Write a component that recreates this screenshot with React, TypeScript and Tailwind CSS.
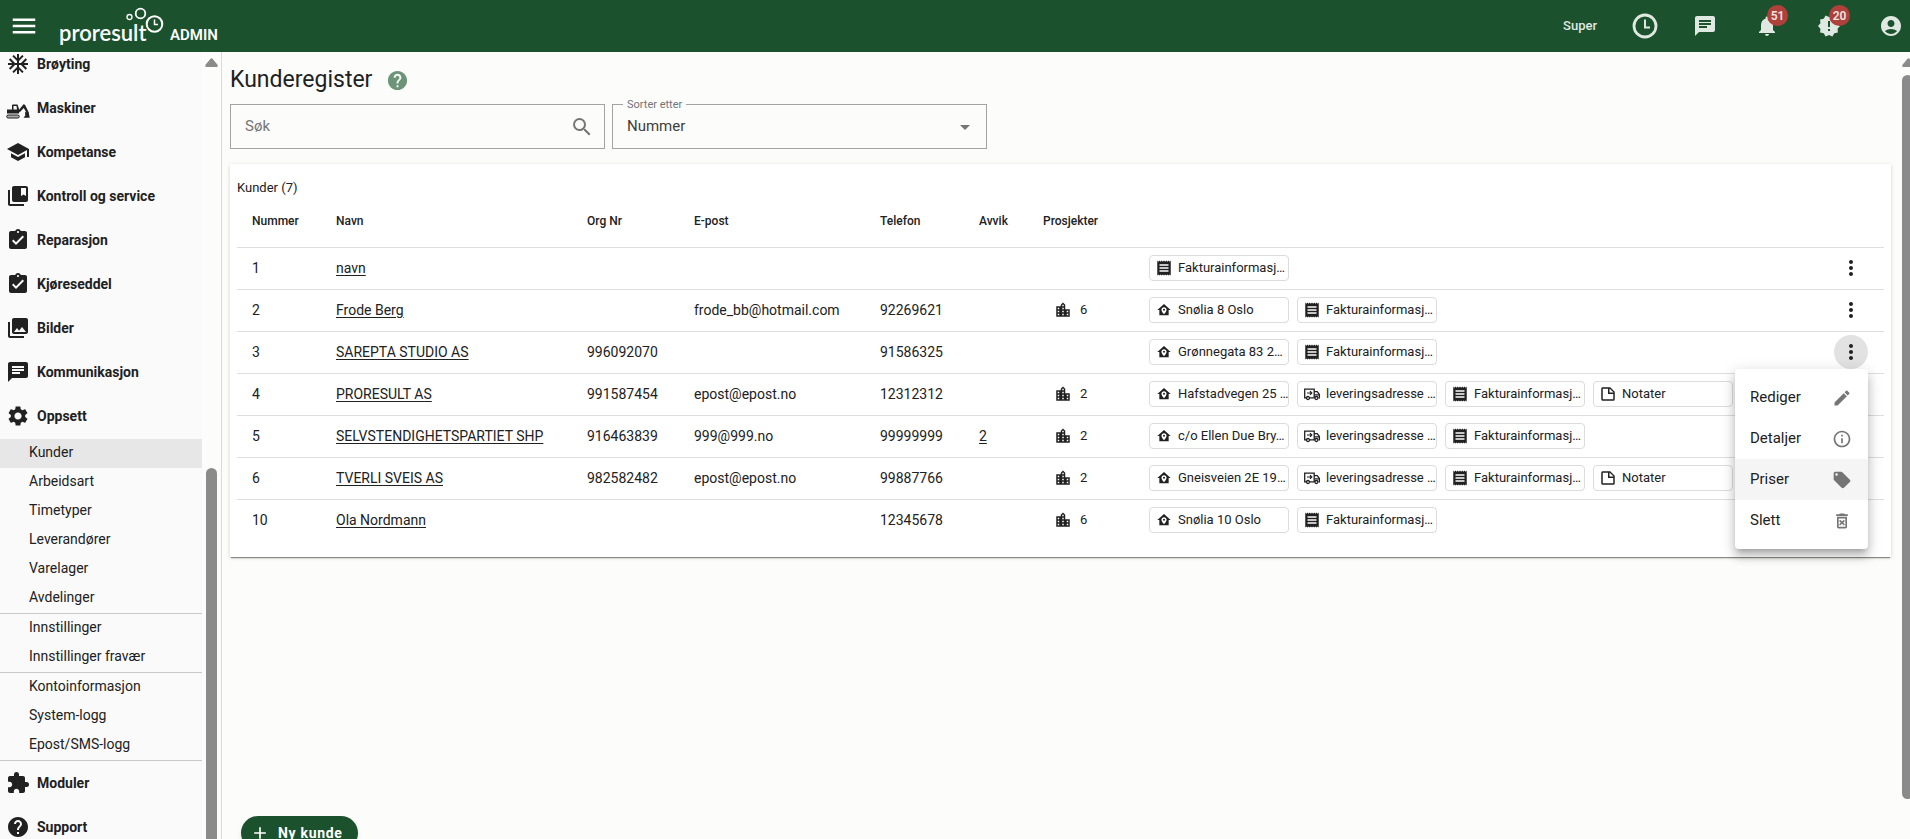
import React from "react";
import {
  MdAcUnit, MdAccountCircle, MdAdd, MdArrowDropDown, MdAssignmentTurnedIn, MdChat, MdCollectionsBookmark,
  MdEdit, MdExtension, MdHelp, MdLocalOffer, MdLocationCity, MdMenu, MdMoreVert, MdNewReleases,
  MdNotifications, MdOutlineDeleteForever, MdOutlineInfo, MdPhotoLibrary, MdReceipt, MdSchool, MdSearch, MdSettings,
} from "react-icons/md";

function Excavator() {
  return (
    <svg viewBox="0 0 24 24" className="mt-1 size-6" fill="currentColor" aria-hidden="true">
      <path fillRule="evenodd" d="M1 15.500v-4h5V7.500a1 1 0 0 1 1-1h4.500l1.500 4.500v4.500zM7.500 8v3.500h3.500L10.500 8z" />
      <path d="M12.500 12.500 L17.500 6.300l1.500.5 4 8.200-2 .8-3.200-5.800-4.300 4.500z" />
      <path d="M19 14l3.800 1 .9 4.800h-6.200l1.800-2.300z" />
      <rect x="0.700" y="17" width="12.600" height="3" rx="1.500" fill="#aaa" stroke="currentColor" strokeWidth="1" />
    </svg>
  );
}

function ClockIcon() {
  return (
    <svg viewBox="0 0 26 26" className="size-[26px]" fill="none" stroke="currentColor" strokeWidth="2.800" aria-hidden="true">
      <circle cx="13" cy="13" r="11" />
      <path d="M13 6.500v8h5" strokeWidth="2" />
    </svg>
  );
}

function HomePin() {
  return (
    <svg viewBox="0 0 24 24" className="size-4" fill="currentColor" aria-hidden="true">
      <path d="M12,3L2,12H5V20H19V12H22L12,3M12,7.700C14.100,7.700 15.800,9.400 15.800,11.500C15.800,14.500 12,18 12,18C12,18 8.200,14.500 8.200,11.500C8.200,9.400 9.900,7.700 12,7.700M12,10A1.500,1.500 0 0,0 10.500,11.500A1.500,1.500 0 0,0 12,13A1.500,1.500 0 0,0 13.500,11.500A1.500,1.500 0 0,0 12,10Z" />
    </svg>
  );
}

function Truck() {
  return (
    <svg viewBox="0 0 18 18" className="size-[18px]" fill="none" stroke="currentColor" strokeWidth="1.300" aria-hidden="true">
      <path d="M3 12.800H1.700V4.200H11.200V12.800H7M11.200 6.700H14.200L16.400 9.500V12.800H15.500" />
      <path d="M11.500 9.800H16" />
      <path d="M4 8H8.500M7 6.200 8.800 8 7 9.800" strokeWidth="1.200" />
      <circle cx="5" cy="13" r="1.500" />
      <circle cx="13.400" cy="13" r="1.500" />
    </svg>
  );
}

function Note() {
  return (
    <svg viewBox="0 0 24 24" className="size-[18px]" fill="currentColor" aria-hidden="true">
      <path d="M14,10H19.500L14,4.500V10M5,3H15L21,9V19A2,2 0 0,1 19,21H5C3.890,21 3,20.100 3,19V5C3,3.890 3.890,3 5,3M5,5V19H19V12H12V5H5Z" />
    </svg>
  );
}

type ChipKind = "home" | "truck" | "receipt" | "note";

const chipIcons: Record<ChipKind, React.ReactNode> = {
  home: <HomePin />,
  truck: <Truck />,
  receipt: <MdReceipt className="size-[18px]" />,
  note: <Note />,
};

interface Customer {
  nr: number;
  name: string;
  org?: string;
  email?: string;
  phone?: string;
  deviations?: number;
  projects?: number;
  chips: [ChipKind, string][];
  open?: boolean;
}

const invoice: [ChipKind, string] = ["receipt", "Fakturainformasj…"];
const delivery: [ChipKind, string] = ["truck", "leveringsadresse …"];
const notes: [ChipKind, string] = ["note", "Notater"];

const customers: Customer[] = [
  { nr: 1, name: "navn", chips: [invoice] },
  { nr: 2, name: "Frode Berg", email: "frode_bb@hotmail.com", phone: "92269621", projects: 6, chips: [["home", "Snølia 8 Oslo"], invoice] },
  { nr: 3, name: "SAREPTA STUDIO AS", org: "996092070", phone: "91586325", chips: [["home", "Grønnegata 83 2…"], invoice], open: true },
  { nr: 4, name: "PRORESULT AS", org: "991587454", email: "epost@epost.no", phone: "12312312", projects: 2, chips: [["home", "Hafstadvegen 25 …"], delivery, invoice, notes] },
  { nr: 5, name: "SELVSTENDIGHETSPARTIET SHP", org: "916463839", email: "999@999.no", phone: "99999999", deviations: 2, projects: 2, chips: [["home", "c/o Ellen Due Bry…"], delivery, invoice] },
  { nr: 6, name: "TVERLI SVEIS AS", org: "982582482", email: "epost@epost.no", phone: "99887766", projects: 2, chips: [["home", "Gneisveien 2E 19…"], delivery, invoice, notes] },
  { nr: 10, name: "Ola Nordmann", phone: "12345678", projects: 6, chips: [["home", "Snølia 10 Oslo"], invoice] },
];

const mainNav: [string, React.ReactNode][] = [
  ["Brøyting", <MdAcUnit className="size-6" />],
  ["Maskiner", <Excavator />],
  ["Kompetanse", <MdSchool className="size-6" />],
  ["Kontroll og service", <MdCollectionsBookmark className="size-6" />],
  ["Reparasjon", <MdAssignmentTurnedIn className="size-6" />],
  ["Kjøreseddel", <MdAssignmentTurnedIn className="size-6" />],
  ["Bilder", <MdPhotoLibrary className="size-6" />],
  ["Kommunikasjon", <MdChat className="size-6" />],
  ["Oppsett", <MdSettings className="size-6" />],
];

const subNav = [
  ["Kunder", "Arbeidsart", "Timetyper", "Leverandører", "Varelager", "Avdelinger"],
  ["Innstillinger", "Innstillinger fravær"],
  ["Kontoinformasjon", "System-logg", "Epost/SMS-logg"],
];

const menuItems: [string, React.ReactNode][] = [
  ["Rediger", <MdEdit className="size-5" />],
  ["Detaljer", <MdOutlineInfo className="size-5" />],
  ["Priser", <MdLocalOffer className="size-5" />],
  ["Slett", <MdOutlineDeleteForever className="size-5" />],
];

function NavItem({ label, icon }: { label: string; icon: React.ReactNode }) {
  return (
    <a href="#" className="flex h-11 shrink-0 items-center gap-[7px] pl-1.5 text-sm font-bold">
      {icon}
      {label}
    </a>
  );
}

function ScrollArrow() {
  return (
    <svg viewBox="0 0 13 9" className="h-[9px] w-[13px] shrink-0" fill="#8b8b8b" aria-hidden="true">
      <path d="M5.500 0.800Q6.500 -0.300 7.500 0.800L12.500 6.800Q13.300 9 11.500 9H1.500Q-0.300 9 0.500 6.800Z" />
    </svg>
  );
}

function Badge({ children }: { children: React.ReactNode }) {
  return (
    <span className="absolute -top-[9px] left-3 flex size-[21px] items-center justify-center rounded-full bg-[#af403b] text-xs font-semibold text-[#f0e4e0]">
      {children}
    </span>
  );
}

function Header() {
  return (
    <header className="flex h-[52px] shrink-0 items-center bg-[#1b522d] text-white">
      <button aria-label="Meny" className="ml-[9px] flex">
        <MdMenu className="size-[30px]" />
      </button>
      <a href="#" className="relative ml-5 flex h-[52px] items-end">
        <span className="mb-[3px] w-[85px] font-[Lato,sans-serif] text-[22px] leading-8 font-semibold">proresult</span>
        <span className="mb-[7px] ml-[26px] text-[15px] leading-5 font-semibold">ADMIN</span>
        <svg viewBox="0 0 40 28" className="absolute top-[6px] left-[65px] h-7 w-10" fill="none" stroke="currentColor" strokeWidth="1.800" aria-hidden="true">
          <circle cx="5.500" cy="11" r="2.500" strokeWidth="1.300" />
          <circle cx="16.500" cy="7.500" r="4.800" />
          <circle cx="30.500" cy="18" r="7.800" strokeWidth="2" />
          <path d="M30.500 13.500V18.500H34" strokeWidth="1.500" />
        </svg>
      </a>
      <div className="ml-auto flex items-center gap-[38px] pr-[7px] text-[#dfe8e1]">
        <span className="mr-[-4px] text-[13px] font-medium">Super</span>
        <button aria-label="Timer" className="-mr-[3px] ml-px flex"><ClockIcon /></button>
        <button aria-label="Meldinger"><MdChat className="size-6" /></button>
        <button aria-label="Varsler" className="relative">
          <MdNotifications className="size-6" />
          <Badge>51</Badge>
        </button>
        <button aria-label="Avvik" className="relative">
          <MdNewReleases className="size-6" />
          <Badge>20</Badge>
        </button>
        <button aria-label="Konto"><MdAccountCircle className="size-6" /></button>
      </div>
    </header>
  );
}

function Sidebar() {
  return (
    <aside className="flex shrink-0 border-r border-[#dcdcdc] bg-[#fcfcfc]">
      <nav className="-mt-2.5 flex w-[202px] flex-col bg-[#fafafa]">
        {mainNav.map(([label, icon]) => (
          <NavItem key={label} label={label} icon={icon} />
        ))}
        <div className="mt-px flex shrink-0 flex-col text-sm">
          {subNav.map((group) => (
            <div key={group[0]} className="border-b border-[#c8c8c8]">
              {group.map((label) => (
                <a key={label} href="#" className={`flex h-[29px] items-center pb-1 pl-[29px] ${label === "Kunder" ? "bg-[#e7e7e7]" : ""}`}>
                  {label}
                </a>
              ))}
            </div>
          ))}
        </div>
        <NavItem label="Moduler" icon={<MdExtension className="size-6" />} />
        <NavItem label="Support" icon={<MdHelp className="size-6" />} />
      </nav>
      <div className="flex w-[19px] flex-col items-center pt-1.5">
        <ScrollArrow />
        <div className="mt-[401px] w-[11px] grow rounded-t-full bg-[#8b8b8b]" />
      </div>
    </aside>
  );
}

function RowMenu() {
  return (
    <div role="menu" className="absolute top-full right-0 z-10 w-[133px] rounded bg-white py-2 text-left text-[15px] shadow-[0_5px_5px_-3px_rgba(0,0,0,0.2),0_8px_10px_1px_rgba(0,0,0,0.14),0_3px_14px_2px_rgba(0,0,0,0.12)]">
      {menuItems.map(([label, icon]) => (
        <button key={label} role="menuitem" className={`flex h-[41px] w-full items-center justify-between pr-4 pl-[15px] ${label === "Priser" ? "bg-[#f5f5f5]" : ""}`}>
          {label}
          <span className="text-[#757575]">{icon}</span>
        </button>
      ))}
    </div>
  );
}

function CustomerTable() {
  return (
    <table className="w-full table-fixed border-collapse text-left text-sm">
      <colgroup>
        <col className="w-[84px]" />
        <col className="w-[251px]" />
        <col className="w-[107px]" />
        <col className="w-[186px]" />
        <col className="w-[99px]" />
        <col className="w-[64px]" />
        <col className="w-[106px]" />
        <col />
        <col className="w-[64px]" />
      </colgroup>
      <thead>
        <tr className="h-[50px] text-xs">
          {["Nummer", "Navn", "Org Nr", "E-post", "Telefon", "Avvik", "Prosjekter", "", ""].map((h, i) => (
            <th key={i} className="pb-0.5 pl-[15px] font-medium">{h}</th>
          ))}
        </tr>
      </thead>
      <tbody>
        {customers.map((c) => (
          <tr key={c.nr} className="h-[42px] border-t border-[#dedede]">
            <td className="pl-[15px]">{c.nr}</td>
            <td className="pl-[15px]"><a href="#" className="underline underline-offset-2">{c.name}</a></td>
            <td className="pl-[15px]">{c.org}</td>
            <td className="pl-[15px]">{c.email}</td>
            <td className="pl-[15px]">{c.phone}</td>
            <td className="pl-[15px]">{c.deviations && <a href="#" className="underline underline-offset-2">{c.deviations}</a>}</td>
            <td className="pl-[26px]">
              {c.projects && (
                <button className="flex items-center gap-2 text-[13px]">
                  <MdLocationCity className="size-[18px]" />
                  {c.projects}
                </button>
              )}
            </td>
            <td className="pl-[15px]">
              <div className="flex gap-2">
                {c.chips.map(([kind, label]) => (
                  <button key={label} className="flex h-[26px] w-[140px] shrink-0 items-center gap-[5px] overflow-hidden rounded border border-[#dcdcdc] pl-[5px] text-[13px] whitespace-nowrap">
                    <span className="flex w-[18px] shrink-0 justify-center">{chipIcons[kind]}</span>
                    {label}
                  </button>
                ))}
              </div>
            </td>
            <td className="pr-4">
              <div className="relative ml-auto w-[34px]">
                <button aria-label="Flere valg" className={`flex size-[34px] items-center justify-center rounded-full ${c.open ? "bg-[#e2e2e2]" : ""}`}>
                  <MdMoreVert className="size-6" />
                </button>
                {c.open && <RowMenu />}
              </div>
            </td>
          </tr>
        ))}
      </tbody>
    </table>
  );
}

export default function App() {
  return (
    <div className="flex h-screen flex-col overflow-hidden bg-[#fcfcfa] font-[Roboto,sans-serif] text-[#212121]">
      <Header />
      <div className="flex min-h-0 grow overflow-hidden">
        <Sidebar />
        <main className="flex min-w-0 grow flex-col pr-[11px] pl-2">
          <div className="flex h-[52px] shrink-0 items-center gap-3.5 pt-1">
            <h1 className="text-[23px]">Kunderegister</h1>
            <button aria-label="Hjelp" className="text-[#6b9479]"><MdHelp className="size-[23px]" /></button>
          </div>
          <div className="flex shrink-0 gap-[7px]">
            <label className="flex h-[45px] w-[375px] items-center border border-[#a3a3a3] pr-2.5 pl-3.5 text-[#757575]">
              <input aria-label="Søk" placeholder="Søk" className="min-w-0 grow bg-transparent text-[15px] outline-none placeholder:text-[#757575]" />
              <MdSearch className="size-6" />
            </label>
            <div className="relative flex h-[45px] w-[375px] items-center border border-[#a3a3a3] text-[#757575]">
              <label htmlFor="sort" className="absolute -top-2 left-[10px] bg-[#fcfcfa] px-1 text-[11px] leading-4">Sorter etter</label>
              <select id="sort" className="h-full w-full appearance-none bg-transparent pl-3.5 text-[15px] text-[#3c3c3c] outline-none">
                <option>Nummer</option>
              </select>
              <MdArrowDropDown className="pointer-events-none absolute right-[9px] size-6" />
            </div>
          </div>
          <section className="mt-[15px] shrink-0 bg-white px-[7px] pb-4 shadow-[0_2px_1px_-1px_rgba(0,0,0,0.4),0_1px_4px_rgba(0,0,0,0.16)]">
            <h2 className="pt-[15px] text-[13px] leading-[18px]">Kunder (7)</h2>
            <CustomerTable />
          </section>
          <button className="mt-auto -mb-[11px] ml-[11px] flex h-[34px] shrink-0 items-center gap-2 self-start rounded-full bg-[#1b522d] pr-[15px] pl-[9px] text-sm font-bold tracking-wider text-white shadow-md">
            <MdAdd className="size-5" />
            Ny kunde
          </button>
        </main>
        <div className="flex w-2 shrink-0 flex-col items-start overflow-hidden pt-1.5">
          <ScrollArrow />
          <div className="mt-2 mb-10 w-[11px] grow rounded-full bg-[#8b8b8b]" />
        </div>
      </div>
    </div>
  );
}
